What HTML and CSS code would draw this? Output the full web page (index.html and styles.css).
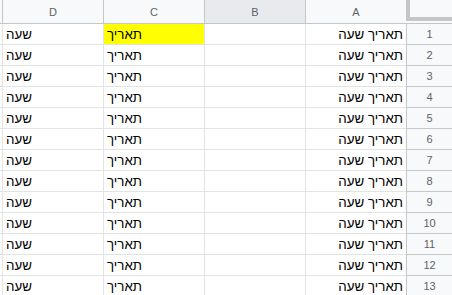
FILE: index.html
```html
<!DOCTYPE html>
<html lang="he" dir="rtl">
<head>
<meta charset="utf-8">
<link rel="stylesheet" href="styles.css">
</head>
<body>
<div class="sheet">
  <div class="hd corner"><div class="corner-bar"></div></div>
  <div class="hd col">A</div>
  <div class="hd col active">B</div>
  <div class="hd col">C</div>
  <div class="hd col">D</div>
  <div class="hd col"></div>

  <div class="rn">1</div><div class="c">תאריך שעה</div><div class="c"></div><div class="c l yellow">תאריך</div><div class="c l">שעה</div><div class="c"></div>
  <div class="rn">2</div><div class="c">תאריך שעה</div><div class="c"></div><div class="c l">תאריך</div><div class="c l">שעה</div><div class="c"></div>
  <div class="rn">3</div><div class="c">תאריך שעה</div><div class="c"></div><div class="c l">תאריך</div><div class="c l">שעה</div><div class="c"></div>
  <div class="rn">4</div><div class="c">תאריך שעה</div><div class="c"></div><div class="c l">תאריך</div><div class="c l">שעה</div><div class="c"></div>
  <div class="rn">5</div><div class="c">תאריך שעה</div><div class="c"></div><div class="c l">תאריך</div><div class="c l">שעה</div><div class="c"></div>
  <div class="rn">6</div><div class="c">תאריך שעה</div><div class="c"></div><div class="c l">תאריך</div><div class="c l">שעה</div><div class="c"></div>
  <div class="rn">7</div><div class="c">תאריך שעה</div><div class="c"></div><div class="c l">תאריך</div><div class="c l">שעה</div><div class="c"></div>
  <div class="rn">8</div><div class="c">תאריך שעה</div><div class="c"></div><div class="c l">תאריך</div><div class="c l">שעה</div><div class="c"></div>
  <div class="rn">9</div><div class="c">תאריך שעה</div><div class="c"></div><div class="c l">תאריך</div><div class="c l">שעה</div><div class="c"></div>
  <div class="rn">10</div><div class="c">תאריך שעה</div><div class="c"></div><div class="c l">תאריך</div><div class="c l">שעה</div><div class="c"></div>
  <div class="rn">11</div><div class="c">תאריך שעה</div><div class="c"></div><div class="c l">תאריך</div><div class="c l">שעה</div><div class="c"></div>
  <div class="rn">12</div><div class="c">תאריך שעה</div><div class="c"></div><div class="c l">תאריך</div><div class="c l">שעה</div><div class="c"></div>
  <div class="rn">13</div><div class="c">תאריך שעה</div><div class="c"></div><div class="c l">תאריך</div><div class="c l">שעה</div><div class="c"></div>
</div>
</body>
</html>
```

FILE: styles.css
```css
html, body {
  margin: 0;
  padding: 0;
  background: #ffffff;
  overflow: hidden;
}

.sheet {
  direction: rtl;
  display: grid;
  grid-template-columns: 46px 101px 101px 101px 101px 1fr;
  grid-template-rows: 24px repeat(13, 21px);
  width: 452px;
  font-family: "Liberation Sans", Arial, sans-serif;
}

.hd {
  box-sizing: border-box;
  background: #f8f9fa;
  border-bottom: 1px solid #c4c7c5;
  border-left: 1px solid #c4c7c5;
  color: #5f6368;
  font-size: 11px;
  display: flex;
  align-items: center;
  justify-content: center;
}

.hd.active {
  background: #e8eaed;
}

.corner {
  border-left: none;
  align-items: flex-start;
  justify-content: stretch;
  padding-bottom: 2px;
}

.corner-bar {
  box-sizing: border-box;
  width: 100%;
  height: 21px;
  border-left: 4px solid #c4c7c5;
  border-bottom: 4px solid #c4c7c5;
}

.rn {
  box-sizing: border-box;
  background: #f8f9fa;
  border-left: 1px solid #c4c7c5;
  border-bottom: 1px solid #c4c7c5;
  color: #5f6368;
  font-size: 11px;
  display: flex;
  align-items: center;
  justify-content: center;
}

.c {
  box-sizing: border-box;
  border-left: 1px solid #e2e3e3;
  border-bottom: 1px solid #e2e3e3;
  color: #000000;
  font-size: 13.33px;
  line-height: 16px;
  display: flex;
  align-items: flex-end;
  padding: 0 3px 1px 3px;
  white-space: nowrap;
  overflow: hidden;
}

.c.l {
  justify-content: flex-end;
}

.c.yellow {
  background: #ffff00;
}
```
